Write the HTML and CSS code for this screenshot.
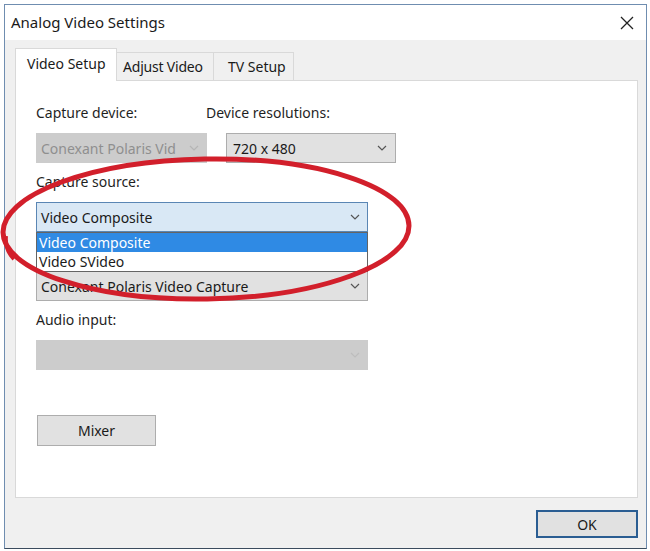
FILE: index.html
```html
<!DOCTYPE html>
<html>
<head>
<meta charset="utf-8">
<link rel="stylesheet" href="styles.css">
</head>
<body>
<div class="window">
  <div class="titlebar">
    <span class="title">Analog Video Settings</span>
    <svg class="close" width="14" height="14" viewBox="0 0 14 14"><path d="M1 1 L13 13 M13 1 L1 13" stroke="#222" stroke-width="1.3" fill="none"/></svg>
  </div>
  <div class="client">
    <div class="tabs">
      <div class="tab active">Video Setup</div>
      <div class="tab t2">Adjust Video</div>
      <div class="tab t3">TV Setup</div>
    </div>
    <div class="panel">
      <div class="labels">
        <span class="label w1">Capture device:</span>
        <span class="label">Device resolutions:</span>
      </div>
      <div class="combos">
        <div class="combo disabled small">
          <span class="val">Conexant Polaris Vid</span>
          <svg class="chev" width="10" height="6" viewBox="0 0 10 6"><path d="M1 1 L5 5 L9 1" stroke="#b5b5b5" stroke-width="1.2" fill="none"/></svg>
        </div>
        <div class="combo normal small2">
          <span class="val">720 x 480</span>
          <svg class="chev" width="10" height="6" viewBox="0 0 10 6"><path d="M1 1 L5 5 L9 1" stroke="#555" stroke-width="1.2" fill="none"/></svg>
        </div>
      </div>
      <div class="label">Capture source:</div>
      <div class="dropwrap">
        <div class="combo open wide">
          <span class="val">Video Composite</span>
          <svg class="chev" width="10" height="6" viewBox="0 0 10 6"><path d="M1 1 L5 5 L9 1" stroke="#555" stroke-width="1.2" fill="none"/></svg>
        </div>
        <div class="list">
          <div class="item sel">Video Composite</div>
          <div class="item">Video SVideo</div>
        </div>
      </div>
      <div class="label spacer"></div>
      <div class="combo normal wide">
        <span class="val">Conexant Polaris Video Capture</span>
        <svg class="chev" width="10" height="6" viewBox="0 0 10 6"><path d="M1 1 L5 5 L9 1" stroke="#555" stroke-width="1.2" fill="none"/></svg>
      </div>
      <div class="label">Audio input:</div>
      <div class="combo disabled wide">
        <span class="val"></span>
        <svg class="chev" width="10" height="6" viewBox="0 0 10 6"><path d="M1 1 L5 5 L9 1" stroke="#bdbdbd" stroke-width="1.2" fill="none"/></svg>
      </div>
      <button class="btn mixer">Mixer</button>
    </div>
    <div class="footer">
      <button class="btn ok">OK</button>
    </div>
  </div>
  <svg class="mark" width="650" height="551" viewBox="0 0 650 551">
    <ellipse cx="206" cy="229" rx="203" ry="70" transform="rotate(-1 206 229)" fill="none" stroke="#d21f2b" stroke-width="5"/>
    <path d="M6 236 C 5 246, 9 254, 14 259" fill="none" stroke="#d21f2b" stroke-width="4"/>
  </svg>
</div>
</body>
</html>
```
FILE: styles.css
```css
html, body {
  margin: 0;
  padding: 0;
  background: #ffffff;
}
body {
  padding: 4px;
  font-family: "Noto Sans", "Open Sans", sans-serif;
  font-size: 14px;
  color: #1a1a1a;
}
.window {
  width: 641px;
  height: 543px;
  border: 1px solid #6f8db0;
  border-bottom-color: #3b4c5e;
  display: flex;
  flex-direction: column;
  background: #f0f0f0;
}
.titlebar {
  height: 35px;
  background: #ffffff;
  display: flex;
  align-items: center;
  justify-content: space-between;
  padding: 0 12px 0 6px;
  flex: none;
}
.title {
  font-size: 15px;
  color: #1a1a1a;
  margin-top: -1px;
}
.close {
  display: block;
  margin-top: 1px;
}
.client {
  flex: 1;
  display: flex;
  flex-direction: column;
  padding: 8px 8px 0 10px;
}
.tabs {
  display: flex;
  align-items: flex-end;
  height: 32px;
  flex: none;
}
.tab {
  height: 27px;
  border: 1px solid #d9d9d9;
  border-bottom: none;
  background: #f0f0f0;
  line-height: 27px;
  white-space: nowrap;
  box-sizing: content-box;
  margin-left: -1px;
  flex: none;
}
.tab.active {
  height: 32px;
  line-height: 30px;
  background: #ffffff;
  padding: 0 9px 0 11px;
  margin-left: 0;
  margin-bottom: -1px;
  position: relative;
  z-index: 1;
  width: 80px;
}
.t2 { width: 85px; padding: 0 5px 0 6px; letter-spacing: -0.2px; }
.t3 { width: 64px; padding: 0 1px 0 14px; }
.panel {
  height: 418px;
  box-sizing: border-box;
  background: #ffffff;
  border: 1px solid #d9d9d9;
  padding: 23px 0 0 20px;
  flex: none;
}
.label {
  display: block;
  height: 18px;
  line-height: 18px;
  color: #1f1f1f;
}
.labels {
  display: flex;
}
.w1 { width: 170px; }
.combos {
  display: flex;
  gap: 19px;
  margin-top: 11px;
  margin-bottom: 10px;
}
.combo {
  height: 30px;
  box-sizing: border-box;
  border: 1px solid #adadad;
  display: flex;
  align-items: center;
  justify-content: space-between;
  padding: 0 7px 0 4px;
}
.label + .combo, .label + .dropwrap { margin-top: 11px; margin-bottom: 10px; }
.small { width: 171px; }
.small2 { width: 170px; padding-left: 6px; padding-right: 8px; }
.wide { width: 332px; }
.combo.disabled {
  background: #cccccc;
  border-color: #cccccc;
  color: #8f8f8f;
}
.combo.normal {
  background: #e1e1e1;
  color: #1a1a1a;
}
.combo.open {
  background: #d9e8f5;
  border-color: #5a86b4;
  color: #1a1a1a;
}
.dropwrap {
  position: relative;
  width: 332px;
}
.list {
  position: absolute;
  left: 0;
  top: 30px;
  width: 332px;
  box-sizing: border-box;
  border: 1px solid #646464;
  background: #ffffff;
  z-index: 2;
}
.item {
  height: 19px;
  line-height: 19px;
  padding-left: 2px;
  color: #1a1a1a;
}
.item.sel {
  background: #2f8ae4;
  color: #ffffff;
}
.btn {
  font-family: "Noto Sans", "Open Sans", sans-serif;
  font-size: 14px;
  color: #1a1a1a;
  background: #e1e1e1;
  border: 1px solid #adadad;
  padding: 0;
  display: block;
}
.mixer {
  width: 119px;
  height: 31px;
  margin-top: 45px;
  margin-left: 1px;
}
.footer {
  display: flex;
  justify-content: flex-end;
  padding-top: 12px;
}
.ok {
  width: 102px;
  height: 28px;
  border: 2px solid #2a5d92;
}
.mark {
  position: absolute;
  left: 0;
  top: 0;
  pointer-events: none;
  z-index: 5;
}
```
